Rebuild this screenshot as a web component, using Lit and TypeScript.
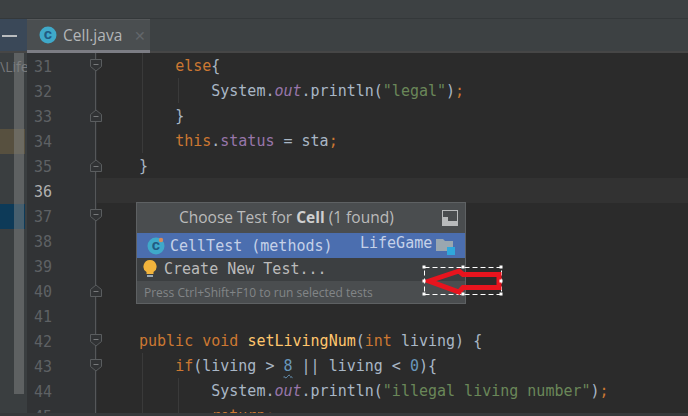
import { LitElement, html, css, svg } from "lit";
import { customElement } from "lit/decorators.js";

type Tok = [string, string?];
const lines: { n: number; indent: number; toks: Tok[]; fold?: string; guides?: string }[] = [
  { n: 31, indent: 4, fold: "down", guides: "g1", toks: [["else", "k"], ["{"]] },
  { n: 32, indent: 8, guides: "g1 g2", toks: [["System."], ["out", "f"], [".println("], ['"legal"', "s"], [")"], [";", "k"]] },
  { n: 33, indent: 4, fold: "up", guides: "g1", toks: [["}"]] },
  { n: 34, indent: 4, guides: "g1", toks: [["this", "k"], ["."], ["status", "f2"], [" = sta"], [";", "k"]] },
  { n: 35, indent: 0, fold: "up", toks: [["}"]] },
  { n: 36, indent: 0, toks: [] },
  { n: 37, indent: 0, fold: "down", toks: [] },
  { n: 38, indent: 0, toks: [] },
  { n: 39, indent: 0, toks: [] },
  { n: 40, indent: 0, fold: "up", toks: [] },
  { n: 41, indent: 0, toks: [] },
  { n: 42, indent: 0, fold: "down", toks: [["public void ", "k"], ["setLivingNum", "m"], ["("], ["int ", "k"], ["living) {"]] },
  { n: 43, indent: 4, fold: "down", guides: "g1", toks: [["if", "k"], ["(living > "], ["8", "num"], [" || living < "], ["0", "n2"], ["){"]] },
  { n: 44, indent: 8, guides: "g1 g2", toks: [["System."], ["out", "f"], [".println("], ['"illegal living number"', "s"], [")"], [";", "k"]] },
  { n: 45, indent: 8, guides: "g1 g2", toks: [["return", "k"], [";", "k"]] },
];

const foldIcon = (dir?: string) => {
  if (!dir) return null;
  const p = dir === "down" ? "M.5 .5H11.5V7.5L6 12L.5 7.5Z" : "M.5 12.5H11.5V5.5L6 1L.5 5.5Z";
  const y = dir === "down" ? 5.5 : 7.5;
  return html`<svg class="fold" width="12" height="13" viewBox="0 0 12 13">
    <path d=${p} fill="#313335" stroke="#5a5d5f"></path>
    <path d="M3.5 ${y}H8.5" stroke="#77797b"></path>
  </svg>`;
};

const cIcon = (cls: string, fill: string, mark: boolean) => html`<svg class=${cls} width="18" height="18" viewBox="0 0 18 18">
  <circle cx="9" cy="9" r="8.5" fill=${fill}></circle>
  <text x="9" y="13" text-anchor="middle" class="c">c</text>
  ${mark ? svg`<circle cx="14" cy="3" r="2.2" fill="#d98a5a"></circle>` : null}
</svg>`;

@customElement("app-root")
export class AppRoot extends LitElement {
  static styles = css`
    :host { display: block; width: 688px; height: 416px; overflow: hidden; background: #2b2b2b; position: relative; }
    .top { height: 18px; background: #3d4143; }
    .tabs { height: 35px; background: #3d4143; display: flex; border-top: 1px solid #34383a; box-sizing: border-box; border-bottom: 2px solid #464646; }
    .pane-tab { width: 27px; background: #3a4858; display: flex; align-items: center; }
    .pane-tab i { display: block; width: 15px; height: 2px; background: #b9bcbe; margin: 2px 0 0 2px; }
    .tab { width: 123px; background: #4a4e50; border-top: 1px solid #55585a; border-bottom: 3px solid #7c7d84; margin-bottom: -2px; box-sizing: border-box; display: flex; align-items: center; padding-left: 12px; gap: 6px;
      font: 15.5px "Open Sans", sans-serif; color: #b4b6b8; }
    .tab .x { color: #62666a; font-size: 14px; margin-left: 6px; }
    .c { font: bold 15px "Liberation Sans", sans-serif; fill: #215a82; }
    .main { display: flex; height: 360px; overflow: hidden; }
    .bottom { height: 3px; background: #36383a; }
    .side { width: 27px; background: #3a3e40; display: flex; flex-direction: column; position: relative; flex: none; }
    .side .life { font: 14px "Open Sans", sans-serif; color: #77797b; height: 25px; line-height: 25px; padding-top: 1px; box-sizing: border-box; white-space: nowrap; overflow: hidden; width: 27px; }
    .side .blk { margin-top: 51px; height: 25px; width: 25px; background: #57503f; }
    .side .sel { margin-top: 50px; height: 25px; width: 25px; background: #0d3a58; }
    .side .strip { position: absolute; left: 14px; top: 0; width: 10px; height: 341px; background: rgba(130,132,132,0.5); }
    .gutter { width: 70px; background: #313335; flex: none; }
    .gnum { height: 25px; display: flex; align-items: center; position: relative; padding: 2px 0 0 7px; box-sizing: border-box; font: 15px "DejaVu Sans Mono", monospace; color: #5e6164; }
    .gnum.cur { color: #b0b0b0; }
    .gnum::after { content: ""; position: absolute; left: 68px; top: 0; bottom: 0; width: 1px; background: #555759; }
    .fold { position: absolute; left: 63px; top: 6px; z-index: 1; }
    .code { flex: 1; min-width: 0; font: 15px/25px "DejaVu Sans Mono", monospace; color: #a9b7c6; }
    .line { height: 25px; padding: 1px 0 0 42px; box-sizing: border-box; white-space: pre; background-repeat: no-repeat; }
    .line.cur { background-color: #323232; }
    .line.g1 { background-image: linear-gradient(#3a3a3a, #3a3a3a); background-size: 1px 100%; background-position: 45px 0; }
    .line.g1.g2 { background-image: linear-gradient(#3a3a3a, #3a3a3a), linear-gradient(#3a3a3a, #3a3a3a); background-size: 1px 100%, 1px 100%; background-position: 45px 0, 81px 0; }
    .k { color: #cc7832; }
    .f { color: #9876aa; font-style: italic; }
    .f2 { color: #9876aa; }
    .s { color: #6a8759; }
    .m { color: #ffc66d; }
    .num { color: #6897bb; text-decoration: underline wavy #6897bb 1px; text-underline-offset: 3px; }
    .n2 { color: #6897bb; }

    .popup { position: absolute; left: 136px; top: 202px; width: 330px; height: 102px; box-sizing: border-box; border: 1px solid #5e6163; background: #3c3f41; display: flex; flex-direction: column; }
    .ptitle { height: 30px; background: #4a4d4f; display: flex; align-items: center; padding: 0 0 2px 42px; box-sizing: border-box; font: 15.5px "Open Sans", sans-serif; color: #bbbbbb; position: relative; flex: none; }
    .ptitle b { color: #d0d0d0; font-weight: 700; }
    .ptitle svg { position: absolute; right: 7px; top: 7px; }
    .row { font: 15px "DejaVu Sans Mono", monospace; white-space: pre; display: flex; align-items: center; flex: none; }
    .row.a { height: 25px; background: #4b6eaf; color: #c5d1e8; padding-left: 10px; position: relative; }
    .row.a .ci { margin-right: 5px; }
    .row.a .mod { position: absolute; left: 223px; top: 0; margin-top: 1px; }
    .row.a .fl { position: absolute; right: 9px; top: 4px; }
    .row.b { height: 23px; color: #bbbbbb; padding: 0 0 2px 6px; box-sizing: border-box; gap: 7px; }
    .foot { flex: 1; background: #4a4d4f; padding-left: 7px; font: 12px "Open Sans", sans-serif; color: #828587; display: flex; align-items: center; }
    .arrow { position: absolute; left: 420px; top: 262px; }
  `;

  render() {
    return html`
      <div class="top"></div>
      <div class="tabs">
        <div class="pane-tab"><i></i></div>
        <div class="tab">${cIcon("ti", "#3fa9c9", false)}<span>Cell.java</span><span class="x">✕</span></div>
      </div>
      <div class="main">
        <div class="side">
          <div class="life">\\Life</div>
          <div class="blk"></div>
          <div class="sel"></div>
          <div class="strip"></div>
        </div>
        <div class="gutter">
          ${lines.map((l) => html`<div class="gnum ${l.n === 36 ? "cur" : ""}">${l.n}${foldIcon(l.fold)}</div>`)}
        </div>
        <div class="code">
          ${lines.map(
            (l) => html`<div class="line ${l.n === 36 ? "cur" : ""} ${l.guides ?? ""}">${" ".repeat(l.indent)}${l.toks.map(
              ([t, c]) => (c ? html`<span class=${c}>${t}</span>` : t)
            )}</div>`
          )}
        </div>
      </div>
      <div class="bottom"></div>
      <div class="popup">
        <div class="ptitle">
          <span>Choose Test for <b>Cell</b> (1 found)</span>
          <svg width="16" height="16" viewBox="0 0 16 16">
            <rect x=".5" y=".5" width="15" height="15" fill="none" stroke="#b8babb"></rect>
            <rect x="1" y="11" width="14" height="4" fill="#b8babb"></rect>
            <rect x="1" y="7" width="5" height="4" fill="#b8babb"></rect>
          </svg>
        </div>
        <div class="row a">
          ${cIcon("ci", "#3fa9c9", true)}<span>CellTest (methods)</span><span class="mod">LifeGame</span>
          <svg class="fl" width="20" height="18" viewBox="0 0 20 18">
            <path d="M0 2H7L9 4H17V14H0Z" fill="#9aa7b0"></path>
            <rect x="11" y="10" width="8" height="8" fill="#2fa8dc"></rect>
          </svg>
        </div>
        <div class="row b">
          <svg width="14" height="18" viewBox="0 0 14 18">
            <path d="M7 0A6.5 6.5 0 0 1 10.5 12V14H3.5V12A6.5 6.5 0 0 1 7 0Z" fill="#f2b43c"></path>
            <rect x="4" y="15" width="6" height="2" fill="#9aa7b0"></rect>
          </svg><span>Create New Test...</span>
        </div>
        <div class="foot">Press Ctrl+Shift+F10 to run selected tests</div>
      </div>
      <svg class="arrow" width="86" height="37" viewBox="0 0 86 37">
        <rect x="4.5" y="5.5" width="77" height="27" fill="none" stroke="#fff" stroke-dasharray="5 3"></rect>
        <path d="M9 19L39 9L43 12.5H79V25.5H43L39 30Z" fill="none" stroke="#e8141e" stroke-width="5"></path>
        ${[[4, 5], [43, 5], [81, 5], [4, 19], [81, 19], [4, 32], [43, 32], [81, 32]].map(
          ([x, y]) => svg`<rect x=${x - 1.5} y=${y - 1.5} width="3" height="3" fill="#fff"></rect>`
        )}
      </svg>
    `;
  }
}
